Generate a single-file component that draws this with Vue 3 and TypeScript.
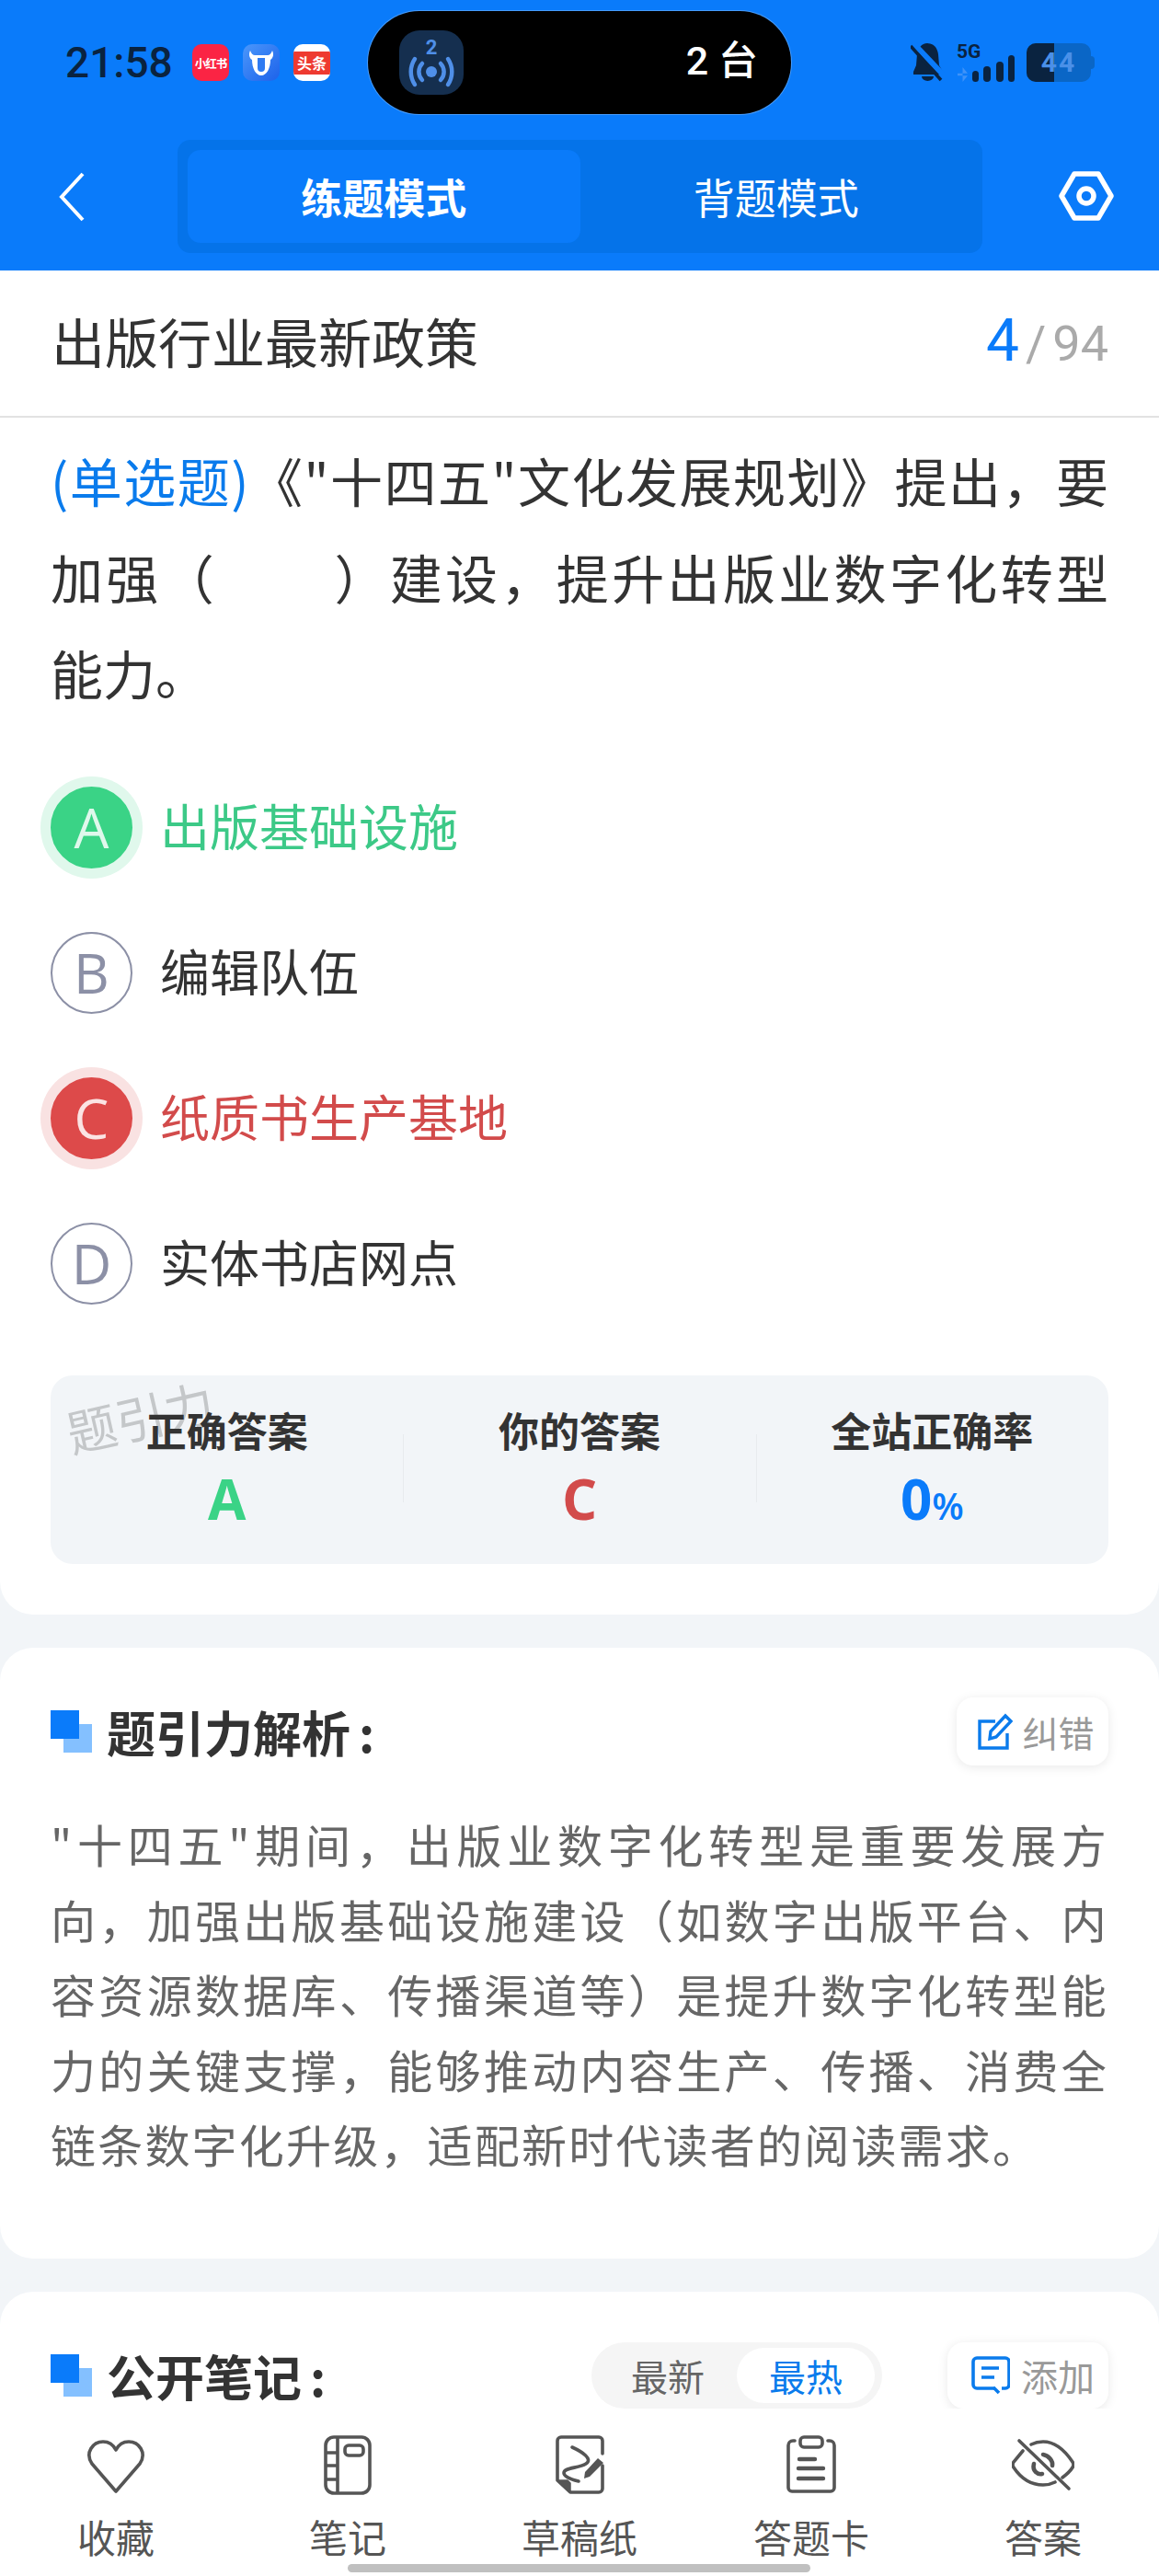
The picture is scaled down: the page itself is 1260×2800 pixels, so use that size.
<script setup lang="ts">
const options = [
  { key: 'A', text: '出版基础设施', state: 'right' },
  { key: 'B', text: '编辑队伍', state: '' },
  { key: 'C', text: '纸质书生产基地', state: 'wrong' },
  { key: 'D', text: '实体书店网点', state: '' },
]
const stats = [
  { label: '正确答案', value: 'A', cls: 'green' },
  { label: '你的答案', value: 'C', cls: 'red' },
  { label: '全站正确率', value: '0', unit: '%', cls: 'blue' },
]
</script>

<template>
  <div class="page">
    <header class="head">
      <div class="status">
        <div class="status-left">
          <span class="time">21:58</span>
          <span class="mini xhs">小红书</span>
          <span class="mini cow">
            <svg viewBox="0 0 40 40" width="40" height="40"><path d="M8 7c1 3 3 5 5 5h14c2 0 4-2 5-5 2 4 1 8-2 10 0 9-4 17-10 17S10 26 10 17C7 15 6 11 8 7z" fill="#fff"/><path d="M16 15h8v11a4 4 0 0 1-8 0z" fill="#2f7bf2"/></svg>
          </span>
          <span class="mini tt"><span class="tt-band">头条</span></span>
        </div>
        <div class="island">
          <span class="island-icon">
            <svg viewBox="0 0 70 70" width="70" height="70" fill="none" stroke="#4f8fe8" stroke-width="4.5" stroke-linecap="round">
              <text x="35" y="26" font-size="22" font-weight="700" font-family="Roboto" fill="#4f8fe8" stroke="none" text-anchor="middle">2</text>
              <circle cx="35" cy="45" r="6" fill="#4f8fe8" stroke="none"/>
              <path d="M25 36a13 13 0 0 0 0 18M45 36a13 13 0 0 1 0 18M17 31a25 25 0 0 0 0 28M53 31a25 25 0 0 1 0 28"/>
            </svg>
          </span>
          <span class="island-text">2 台</span>
        </div>
        <div class="status-right">
          <svg class="bell" viewBox="0 0 37 43" width="37" height="43">
            <path d="M18 1c7 0 11 5 12 12l1 12 4 7v3H3v-3l3-7 1-12C8 6 12 1 18 1z" fill="#0a2340"/>
            <path d="M12 37h13a6.500 5 0 0 1-13 0z" fill="#0a2340"/>
            <path d="M2 0l36 38" stroke="#0a7bfa" stroke-width="6"/>
            <path d="M0 4l33 37" stroke="#0a2340" stroke-width="3.500"/>
          </svg>
          <div class="signal">
            <span class="five">5G</span>
            <span class="arrows"></span>
            <span class="bar b1"></span><span class="bar b2"></span><span class="bar b3"></span><span class="bar b4"></span>
          </div>
          <div class="battery"><span class="bat-fill"></span><span class="bat-num">44</span><span class="bat-nub"></span></div>
        </div>
      </div>
      <div class="nav">
        <svg class="back" viewBox="0 0 30 54" width="30" height="54" fill="none" stroke="#fff" stroke-width="4"><path d="M27 2L4 27l23 25"/></svg>
        <div class="tabs">
          <div class="tab active">练题模式</div>
          <div class="tab">背题模式</div>
        </div>
        <svg class="hex" viewBox="0 0 60 56" width="60" height="56" fill="none" stroke="#fff" stroke-width="5.500" stroke-linejoin="round"><path d="M17 4h26l14 24-14 24H17L3 28z"/><circle cx="30" cy="28" r="8"/></svg>
      </div>
    </header>

    <main class="content">
      <section class="card first">
        <div class="title-row">
          <span class="chapter">出版行业最新政策</span>
          <span class="count"><b>4</b><i>/</i>94</span>
        </div>
        <p class="question"><span class="qtype">(单选题)</span>《"十四五"文化发展规划》提出，要加强（<span class="blank"></span>）建设，提升出版业数字化转型<span class="keep">能力。</span></p>
        <ul class="options">
          <li v-for="o in options" :key="o.key" class="option" :class="o.state">
            <span class="letter">{{ o.key }}</span>
            <span class="opt-text">{{ o.text }}</span>
          </li>
        </ul>
        <div class="stats">
          <span class="mark">题引力</span>
          <div v-for="s in stats" :key="s.label" class="stat">
            <span class="stat-label">{{ s.label }}</span>
            <span class="stat-value" :class="s.cls">{{ s.value }}<small v-if="s.unit">{{ s.unit }}</small></span>
          </div>
        </div>
      </section>

      <section class="card analysis">
        <div class="sec-head">
          <span class="squares"></span>
          <h2>题引力解析<span class="colon">:</span></h2>
          <span class="chip">
            <svg viewBox="0 0 38 40" width="38" height="40" fill="none" stroke="#0a7bec" stroke-width="3.400"><path d="M32 22v16H2V9h17"/><path d="M13 28l1-8L30 3l6 6-16 17z"/></svg>
            纠错
          </span>
        </div>
        <p class="explain">"十四五"期间，出版业数字化转型是重要发展方向，加强出版基础设施建设（如数字出版平台、内容资源数据库、传播渠道等）是提升数字化转型能力的关键支撑，能够推动内容生产、传播、消费全链条数字化升级，适配新时代读者的阅读需求。</p>
      </section>

      <section class="card notes">
        <div class="sec-head">
          <span class="squares"></span>
          <h2>公开笔记<span class="colon">:</span></h2>
          <div class="seg"><span>最新</span><span class="on">最热</span></div>
          <span class="chip add">
            <svg viewBox="0 0 42 42" width="42" height="42" fill="none" stroke="#0a7bec" stroke-width="3.600" stroke-linejoin="round"><path d="M25 35H6a4 4 0 0 1-4-4V6a4 4 0 0 1 4-4h31a4 4 0 0 1 4 4v25a4 4 0 0 1-4 4h-4"/><path d="M24 34l6 6M11 13h19M11 23h14"/></svg>
            添加
          </span>
        </div>
      </section>
    </main>

    <nav class="bottom">
      <div class="item">
        <svg viewBox="0 0 66 66" width="66" height="66" fill="none" stroke="#555" stroke-width="3.600" stroke-linejoin="round"><path d="M33 62L7 32C-1 20 8 8 19 8c6 0 11 3 14 9 3-6 8-9 14-9 11 0 20 12 12 24z"/></svg>
        <span>收藏</span>
      </div>
      <div class="item">
        <svg viewBox="0 0 66 66" width="66" height="66" fill="none" stroke="#555" stroke-width="3.600"><rect x="9" y="3" width="48" height="61" rx="9"/><path d="M22 3v61M9 20h13M9 34h13M9 49h13"/><rect x="30" y="12" width="20" height="11" rx="4"/></svg>
        <span>笔记</span>
      </div>
      <div class="item">
        <svg viewBox="0 0 66 66" width="66" height="66" fill="none" stroke="#555" stroke-width="3.600" stroke-linejoin="round" stroke-linecap="round">
          <g transform="translate(6 1)">
            <path d="M52 20V6a4 4 0 0 0-4-4H7a4 4 0 0 0-4 4v43l14 13h31a4 4 0 0 0 4-4V33"/>
            <path d="M3 49h11l3 3v10z" fill="#555" stroke-width="1.500"/>
            <path d="M19 13c11 5 23 13 15 18-8 5-24 4-24 10 0 4 8 7 16 9"/>
            <path d="M32 47l1-7 14-15 6 5-15 15z" fill="#555" stroke="none"/>
          </g>
        </svg>
        <span>草稿纸</span>
      </div>
      <div class="item">
        <svg viewBox="0 0 66 66" width="66" height="66" fill="none" stroke="#555" stroke-width="3.600" stroke-linecap="round">
          <g transform="translate(6 1)">
            <path d="M9 6H7a5 5 0 0 0-5 5v46a4 4 0 0 0 4 4h42a4 4 0 0 0 4-4V11a5 5 0 0 0-5-5h-2"/>
            <rect x="15" y="2" width="24" height="11" rx="4"/>
            <path d="M14 26h17M13 36h27M13 47h27" stroke-width="4.400"/>
          </g>
        </svg>
        <span>答题卡</span>
      </div>
      <div class="item">
        <svg viewBox="0 0 68 66" width="68" height="66" fill="none" stroke="#555" stroke-width="3.600" stroke-linecap="round">
          <g transform="translate(0 6)">
            <path d="M12 12L2 24q-2 3 0 6c8 12 18 19 32 19 4 0 9-1 13-3"/>
            <path d="M21 5c4-2 9-3 13-3 14 0 24 10 32 22q2 3 0 6c-3 5-7 8-11 11"/>
            <path d="M24 26c-2 8 4 12 9 11M34 16c6 1 11 7 10 12" stroke-width="4.600"/>
            <path d="M8 1l54 52"/>
          </g>
        </svg>
        <span>答案</span>
      </div>
      <span class="home"></span>
    </nav>
  </div>
</template>

<style>
html, body { margin: 0; background: #f2f5f8; }
</style>

<style scoped>
* { box-sizing: border-box; }
.page { position: relative; width: 1260px; height: 2800px; overflow: hidden; background: #f2f5f8; color: #333; font-family: "Noto Sans CJK SC", "Noto Sans", sans-serif; }
.head { height: 294px; background: #0a7bfa; }
.status { height: 136px; display: flex; align-items: flex-start; padding-top: 12px; position: relative; }
.status-left { display: flex; align-items: center; width: 400px; height: 112px; padding-left: 71px; }
.time { width: 138px; font: 500 46px/1 Roboto, sans-serif; color: #0a2340; }
.mini { width: 40px; height: 40px; border-radius: 10px; margin-right: 15px; display: flex; align-items: center; justify-content: center; overflow: hidden; }
.xhs { background: #fb2444; color: #fff; font-size: 12.500px; font-weight: 700; white-space: nowrap; letter-spacing: -1px; }
.cow { background: linear-gradient(135deg, #4a97fb, #1d62ea); }
.tt { background: #fff; }
.tt-band { width: 100%; height: 25px; background: #ee3a30; color: #fff; font-size: 16px; font-weight: 700; text-align: center; line-height: 25px; }
.island { width: 460px; height: 112px; border-radius: 56px; background: #000; box-shadow: 0 0 0 1px rgba(255,255,255,.25); display: flex; align-items: center; justify-content: space-between; padding: 0 36px 0 34px; }
.island-icon { width: 70px; height: 70px; border-radius: 22px; background: #152f4f; display: block; }
.island-text { color: #fff; font: 500 43px/1 Roboto, "Noto Sans CJK SC", sans-serif; margin-top: -4px; }
.status-right { display: flex; align-items: flex-start; height: 42px; margin: 35px 0 0 130px; }
.bell { display: block; margin-top: -1px; }
.signal { position: relative; width: 64px; height: 42px; margin-left: 13px; }
.five { position: absolute; left: 0; top: -2px; font: 700 21px/22px Roboto, sans-serif; color: #0a2340; }
.arrows { position: absolute; left: 1px; top: 26px; width: 11px; height: 16px; background: #3f93f8; clip-path: polygon(50% 0, 100% 42%, 0 42%, 0 58%, 100% 58%, 50% 100%); }
.bar { position: absolute; bottom: 0; border-radius: 4px; background: #0a2340; }
.b1 { left: 17px; width: 7px; height: 12px; }
.b2 { left: 29px; width: 8px; height: 17px; }
.b3 { left: 43px; width: 8px; height: 22px; }
.b4 { left: 56px; width: 7px; height: 29px; }
.battery { position: relative; width: 70px; height: 42px; margin-left: 12px; border-radius: 10px; background: #0a66c6; }
.bat-fill { position: absolute; left: 0; top: 0; bottom: 0; width: 30px; background: #0a2340; border-radius: 10px 0 0 10px; }
.bat-num { position: absolute; inset: 0; text-align: center; font: 700 30px/42px Roboto, sans-serif; color: #4a90e8; letter-spacing: 2px; }
.bat-nub { position: absolute; left: 70px; top: 14px; width: 4px; height: 14px; border-radius: 0 4px 4px 0; background: #0a66c6; }
.nav { height: 158px; display: flex; align-items: flex-start; padding-top: 16px; }
.back { margin: 35px 0 0 63px; flex: none; }
.tabs { width: 875px; height: 123px; margin-left: 100px; padding: 11px; border-radius: 14px; background: #0573e9; display: flex; flex: none; }
.tab { flex: 1; display: flex; align-items: center; justify-content: center; color: #fff; font-size: 45px; border-radius: 14px; }
.tab.active { background: #0a7bfa; font-weight: 700; }
.hex { margin: 33px 0 0 83px; flex: none; }
.content { display: flex; flex-direction: column; gap: 36px; }
.card { background: #fff; border-radius: 36px; }
.first { border-radius: 0 0 36px 36px; height: 1461px; }
.title-row { height: 160px; display: flex; align-items: center; justify-content: space-between; padding: 0 55px 6px 56px; border-bottom: 2px solid #e2e2e2; }
.chapter { font-size: 58px; color: #333; }
.count { font: 400 54px Roboto, sans-serif; color: #aaa; }
.count b { font-size: 64px; font-weight: 400; color: #0a7bfa; }
.count i { font-style: normal; margin: 0 7px; }
.question { margin: 15px 55px 0; font-size: 57px; line-height: 104.500px; color: #333; text-align: justify; }
.qtype { color: #0a7bec; }
.blank { display: inline-block; width: 124px; }
.keep { white-space: nowrap; }
.options { list-style: none; margin: 35px 0 0; padding: 0 0 0 55px; }
.option { height: 158px; display: flex; align-items: center; }
.letter { width: 89px; height: 89px; margin-top: 5px; border-radius: 50%; border: 2px solid #8c90a6; color: #8c90a6; display: flex; align-items: center; justify-content: center; font: 400 60px/1 "Open Sans", sans-serif; }
.opt-text { margin-left: 30px; font-size: 54px; color: #333; }
.right .letter { background: #3ad386; border-color: #3ad386; color: #dff8ec; box-shadow: 0 0 0 11px #e0f8ec; }
.right .opt-text { color: #3cc987; }
.wrong .letter { background: #dd4a4a; border-color: #dd4a4a; color: #fbe3e3; box-shadow: 0 0 0 11px #f9e2e2; }
.wrong .opt-text { color: #d24b4b; }
.stats { position: relative; margin: 45px 55px 0; height: 205px; border-radius: 24px; background: #f2f5f8; display: flex; padding-top: 28px; }
.stat { flex: 1; display: flex; flex-direction: column; align-items: center; position: relative; }
.stat + .stat::before { content: ""; position: absolute; left: 0; top: 36px; height: 74px; width: 1px; background: #e8ebee; }
.stat-label { font-size: 44px; font-weight: 700; line-height: 62px; color: #333; }
.stat-value { font: 700 60px/76px "Open Sans", sans-serif; margin-top: 6px; }
.stat-value small { font-size: 40px; font-weight: 600; }
.green { color: #3ad386; }
.red { color: #d24b4b; }
.blue { color: #0a7bfa; }
.mark { position: absolute; left: 16px; top: 4px; font-size: 54px; color: rgba(80,80,80,.28); transform: rotate(-13deg); }
.sec-head { display: flex; align-items: center; position: relative; }
.analysis { height: 664px; padding: 54px 55px 0; }
.squares { position: relative; width: 45px; height: 46px; flex: none; margin-right: 16px; }
.squares::before { content: ""; position: absolute; right: 0; bottom: 0; width: 31px; height: 31px; background: #84c0ff; }
.squares::after { content: ""; position: absolute; left: 0; top: 0; width: 31px; height: 31px; background: #0a7bfa; }
h2 { margin: 0; font-size: 53px; font-weight: 700; color: #333; line-height: 74px; flex: 1; }
.colon { margin-left: 9px; }
.chip { display: flex; align-items: center; gap: 10px; width: 165px; height: 74px; padding-left: 8px; justify-content: center; border-radius: 18px; background: #fff; box-shadow: 0 2px 12px rgba(0,0,0,.09); font-size: 39px; color: #999; }
.explain { margin: 44px 0 0; font-size: 49px; letter-spacing: 2.200px; line-height: 81.500px; color: #666; text-align: justify; }
.notes { height: 400px; padding: 55px 55px 0; }
.notes .sec-head { height: 72px; }
.notes h2 { flex: none; width: 527px; }
.seg { width: 316px; height: 72px; border-radius: 36px; background: #f5f5f5; display: flex; align-items: center; padding: 0 8px; font-size: 40px; color: #666; }
.seg span { flex: 1; text-align: center; line-height: 60px; border-radius: 30px; }
.seg .on { background: #fff; color: #0a7bec; }
.chip.add { position: absolute; right: 0; width: 175px; height: 72px; gap: 12px; font-size: 40px; justify-content: flex-start; padding-left: 26px; }
.bottom { position: absolute; left: 0; right: 0; bottom: 0; height: 182px; background: #fff; display: grid; grid-template-columns: repeat(5, 1fr); }
.item { display: flex; flex-direction: column; align-items: center; padding-top: 28px; color: #555; font-size: 42px; }
.item svg { flex: none; }
.item span { line-height: 60px; margin-top: 15px; }
.home { position: absolute; left: 378px; bottom: 4px; width: 503px; height: 9px; border-radius: 5px; background: #c0c0c0; }
</style>
